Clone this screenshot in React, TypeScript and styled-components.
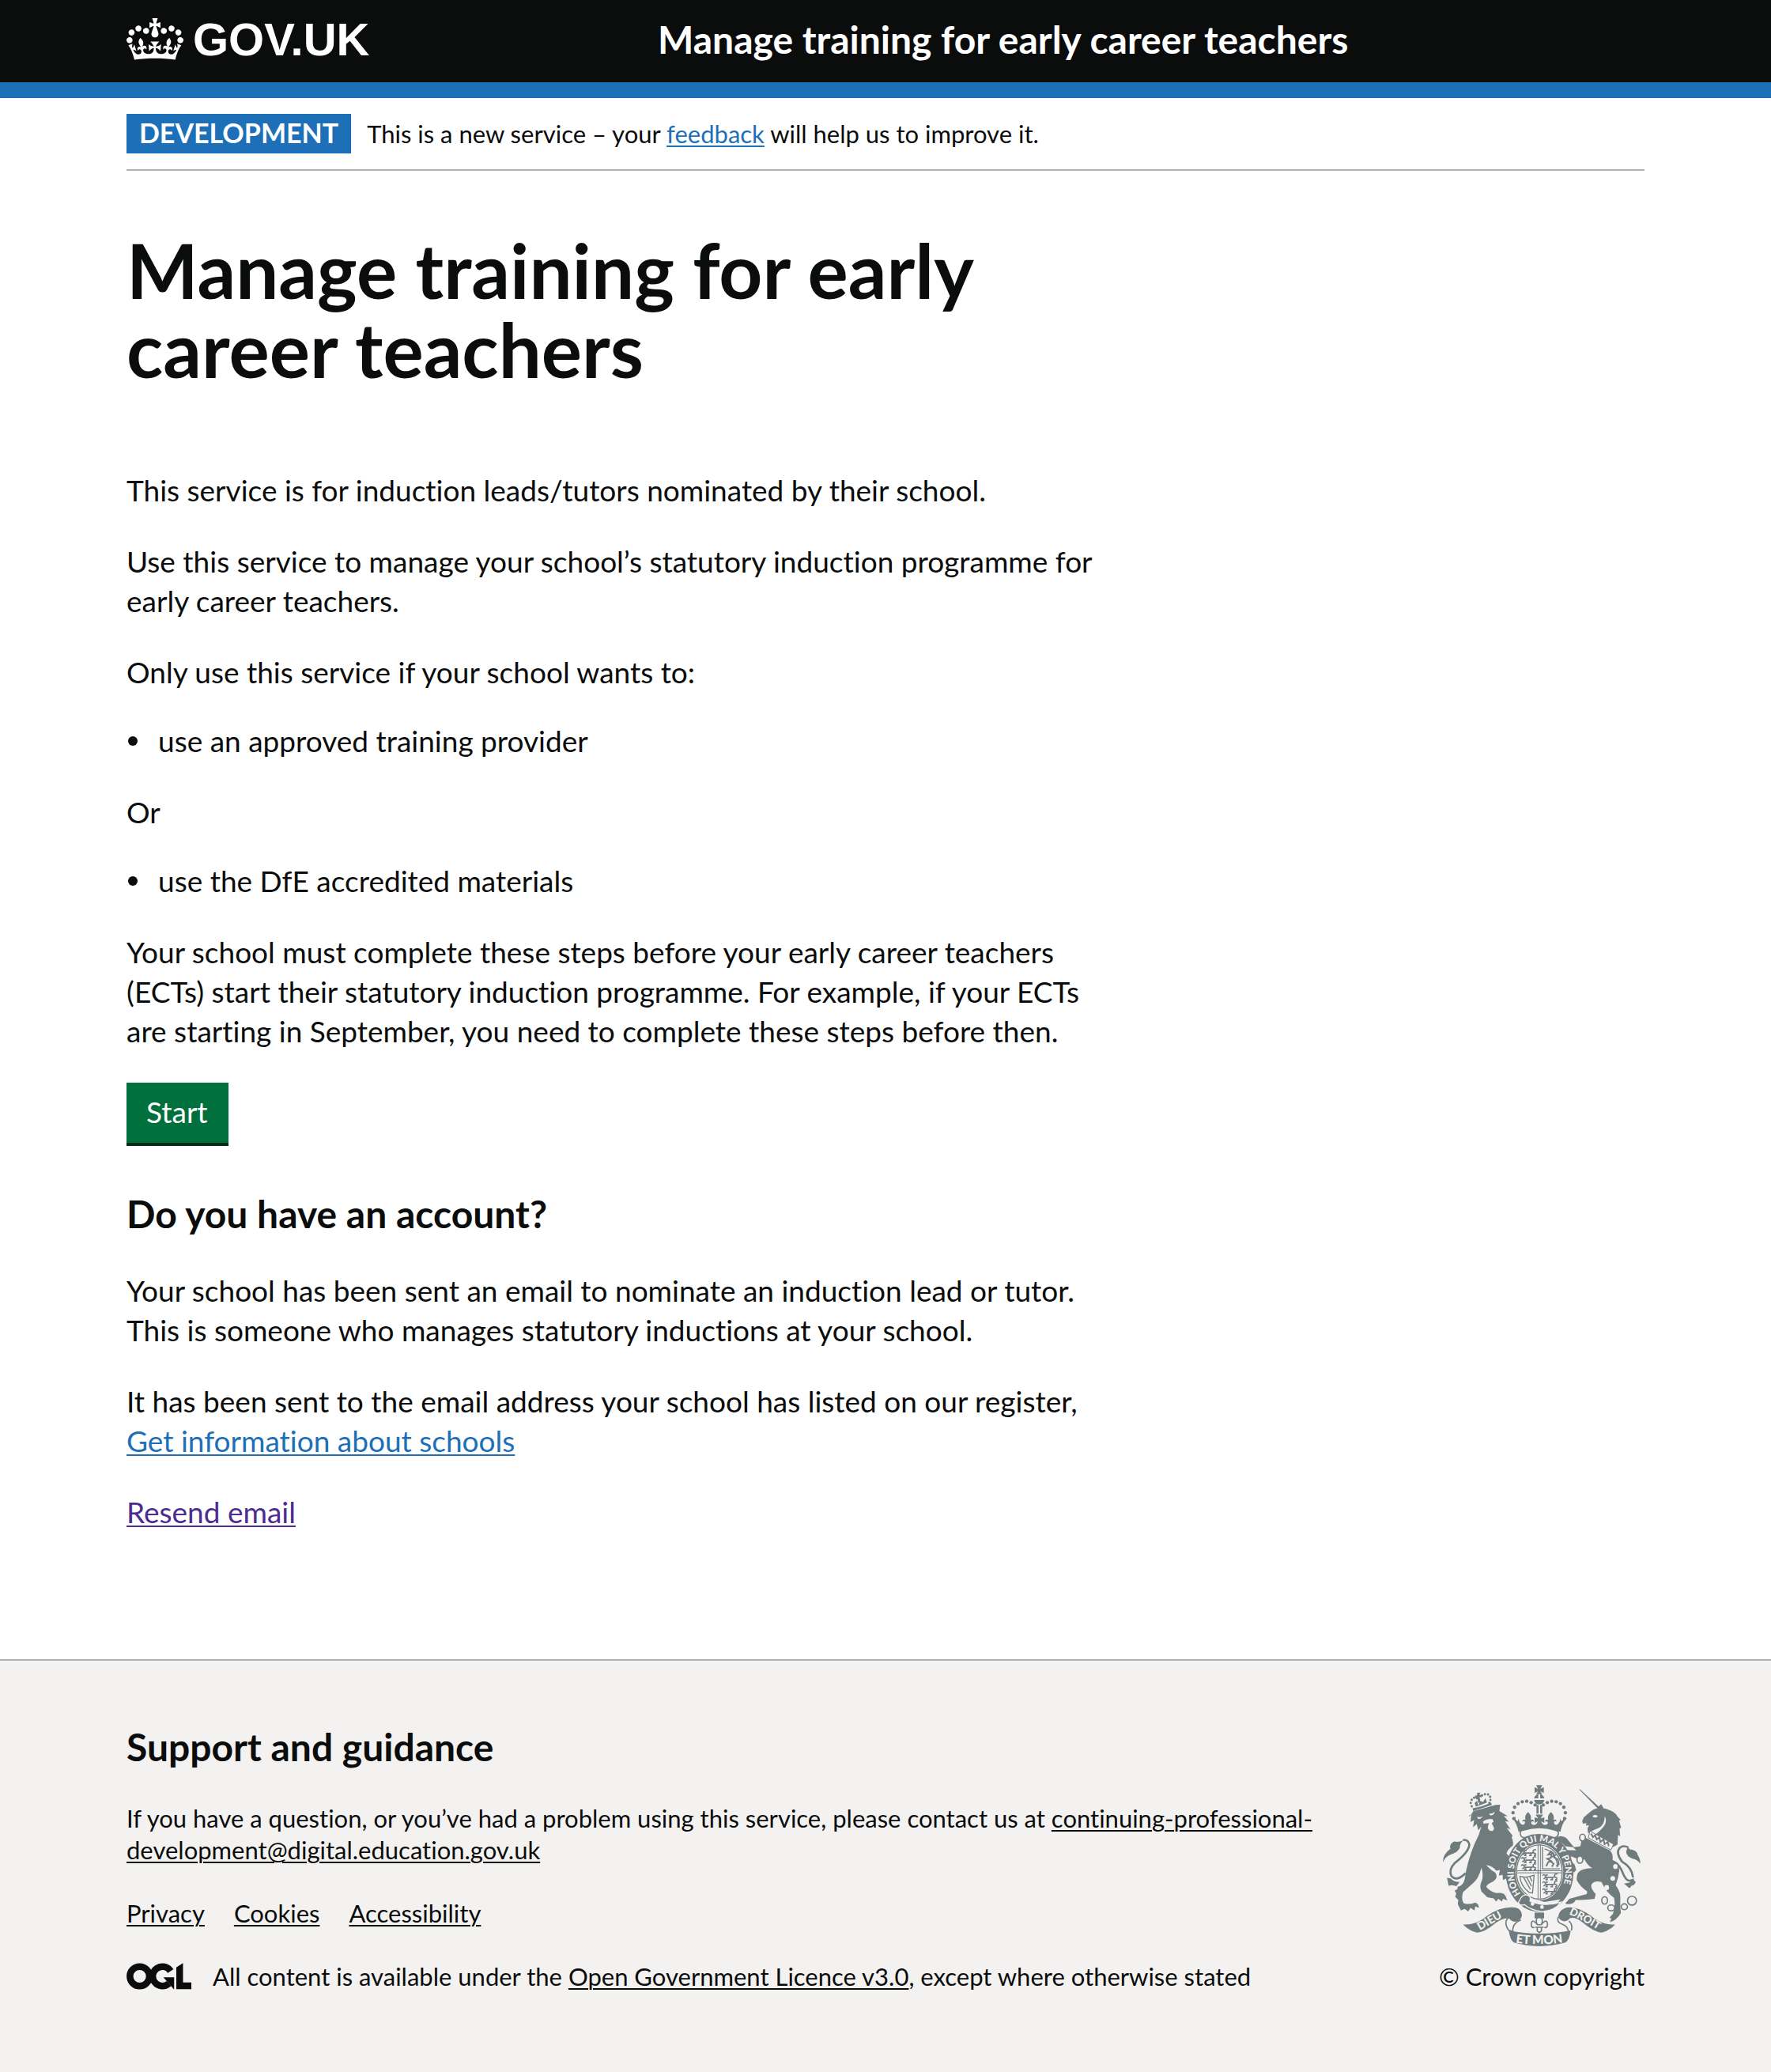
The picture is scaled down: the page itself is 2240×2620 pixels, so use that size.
import React from 'react';
import styled, { createGlobalStyle, css } from 'styled-components';

const ink = '#0b0c0c';
const blue = '#1d70b8';
const visited = '#4c2c92';
const grey = '#b1b4b6';
const footerBg = '#f3f2f1';
const armsGrey = '#707b7d';

const Global = createGlobalStyle`
  *, *::before, *::after { box-sizing: border-box; }
  html { background: ${footerBg}; }
  body {
    margin: 0;
    background: #fff;
    color: ${ink};
    font-family: Lato, "Liberation Sans", sans-serif;
    font-variant-ligatures: no-common-ligatures;
    -webkit-font-smoothing: antialiased;
  }
`;

const Container = styled.div`
  margin: 0 160px;
`;

const HeaderBar = styled.header`
  background: ${ink};
  color: #fff;
  border-bottom: 20px solid ${blue};
`;

const HeaderRow = styled(Container)`
  display: grid;
  grid-template-columns: 35fr 65fr;
  align-items: center;
  height: 104px;
  padding-bottom: 5px;
`;

const headerLink = css`
  color: #fff;
  text-decoration: none;
`;

const LogoLink = styled.a`
  ${headerLink}
  display: inline-flex;
  align-items: center;
  gap: 12px;
  justify-self: start;
`;

const Wordmark = styled.span`
  font: 700 58px/72px "Liberation Sans", Arial, sans-serif;
`;

const ServiceName = styled.a`
  ${headerLink}
  font-size: 48px;
  line-height: 60px;
  font-weight: 700;
`;

const PhaseBanner = styled(Container)`
  display: flex;
  gap: 20px;
  padding: 20px 0;
  border-bottom: 2px solid ${grey};
  font-size: 31px;
  line-height: 50px;
`;

const PhaseTag = styled.strong`
  height: 50px;
  padding: 0 16px;
  background: ${blue};
  color: #fff;
  font-size: 34px;
  line-height: 48px;
`;

const Link = styled.a<{ $tone?: string }>`
  color: ${(p) => p.$tone ?? blue};
  text-decoration: underline;
  text-decoration-thickness: 2px;
  text-underline-offset: 3px;
`;

const Main = styled(Container).attrs({ as: 'main' })`
  padding: 75px 0 121px;
`;

const Column = styled.div`
  max-width: 1260px;
`;

const PageTitle = styled.h1`
  margin: 0 0 104px;
  font-size: 96px;
  line-height: 100px;
  font-weight: 700;
`;

const Heading = styled.h2`
  margin: 0 0 42px;
  font-size: 48px;
  line-height: 60px;
  font-weight: 700;
`;

const Body = styled.p<{ $lead?: boolean }>`
  margin: 0 0 ${(p) => (p.$lead ? 37 : 40)}px;
  font-size: 37px;
  line-height: 50px;
`;

const Bullets = styled.ul`
  margin: 0 0 40px;
  padding: 0 0 0 2px;
  font-size: 37px;
  line-height: 50px;
  list-style: none;
`;

const Bullet = styled.li`
  display: flex;
  align-items: center;
  gap: 26px;

  &::before {
    content: '';
    width: 12px;
    height: 12px;
    border-radius: 50%;
    background: ${ink};
  }
`;

const StartButton = styled.button`
  display: block;
  margin: 0 0 60px;
  padding: 12px 26px 14px 25px;
  border: 0;
  background: #00703c;
  box-shadow: 0 4px 0 #002d18;
  color: #fff;
  font-family: inherit;
  font-size: 37px;
  line-height: 50px;
  cursor: pointer;
`;

const Footer = styled.footer`
  border-top: 2px solid ${grey};
  background: ${footerBg};
  padding: 79px 0 101px;
`;

const FooterRow = styled(Container)`
  display: flex;
  align-items: flex-end;
  gap: 60px;
  font-size: 31px;
  line-height: 40px;
`;

const FooterMain = styled.div`
  flex: 1;
`;

const FooterHeading = styled(Heading)`
  margin-bottom: 40px;
`;

const FooterText = styled.p`
  margin: 0 0 40px;
  max-width: 1540px;
`;

const FooterNav = styled.ul`
  display: flex;
  gap: 37px;
  margin: 0 0 40px;
  padding: 0;
  list-style: none;
`;

const Licence = styled.div`
  display: flex;
  align-items: center;
  gap: 27px;
`;

const Copyright = styled.a`
  display: flex;
  flex-direction: column;
  align-items: center;
  gap: 18px;
  color: ${ink};
  text-decoration: none;
  white-space: nowrap;
`;

const Crown = () => (
  <svg width="72" height="53" viewBox="0 0 132 97" fill="currentColor" aria-hidden="true">
    <path d="M25 30.2c3.5 1.5 7.7-.2 9.1-3.7 1.5-3.6-.2-7.8-3.9-9.2-3.6-1.4-7.6.3-9.1 3.9-1.4 3.5.3 7.5 3.9 9zM9 39.5c3.6 1.5 7.8-.2 9.2-3.7 1.5-3.6-.2-7.8-3.9-9.1-3.6-1.5-7.6.2-9.1 3.8-1.4 3.5.3 7.5 3.8 9zM4.4 57.2c3.5 1.5 7.7-.2 9.1-3.8 1.5-3.6-.2-7.7-3.9-9.1-3.5-1.5-7.6.3-9.1 3.8-1.4 3.5.3 7.6 3.9 9.1zm38.3-21.4c3.5 1.5 7.7-.2 9.1-3.8 1.5-3.6-.2-7.7-3.9-9.1-3.6-1.5-7.6.3-9.1 3.8-1.3 3.6.4 7.7 3.9 9.1zm64.4-5.6c-3.6 1.5-7.8-.2-9.1-3.7-1.5-3.6.2-7.8 3.8-9.2 3.6-1.4 7.7.3 9.2 3.9 1.3 3.5-.4 7.5-3.9 9zm15.9 9.3c-3.6 1.5-7.7-.2-9.1-3.7-1.5-3.6.2-7.8 3.7-9.1 3.6-1.5 7.7.2 9.2 3.8 1.5 3.5-.3 7.5-3.8 9zm4.7 17.7c-3.6 1.5-7.8-.2-9.2-3.8-1.5-3.6.2-7.7 3.9-9.1 3.6-1.5 7.7.3 9.2 3.8 1.3 3.5-.4 7.6-3.9 9.1zM89.3 35.8c-3.6 1.5-7.8-.2-9.2-3.8-1.4-3.6.2-7.7 3.9-9.1 3.6-1.5 7.7.3 9.2 3.8 1.4 3.6-.3 7.7-3.9 9.1zM69.7 17.7l8.9 4.7V9.3l-8.9 2.8c-.2-.3-.5-.6-.9-.9L72.4 0H59.6l3.5 11.2c-.3.3-.6.5-.9.9l-8.8-2.8v13.1l8.8-4.7c.3.3.6.7.9.9l-5 15.4v.1c-.2.8-.4 1.6-.4 2.4 0 4.1 3.1 7.5 7 8.1h.2c.3 0 .7.1 1 .1.4 0 .7 0 1-.1h.2c4-.6 7.1-4.1 7.1-8.1 0-.8-.1-1.7-.4-2.4V34l-5.1-15.4c.4-.2.7-.6 1-.9zM66 92.8c16.9 0 32.8 1.1 47.1 3.2 4-16.9 8.9-26.7 14-33.5l-9.6-3.4c1 4.9 1.1 7.2 0 10.2-1.5-1.4-3-4.3-4.2-8.7L108.6 76c2.8-2 5-3.2 7.5-3.3-4.4 9.4-10 11.9-13.6 11.2-4.3-.8-6.3-4.6-5.6-7.9 1-4.7 5.7-5.9 8-.5 4.3-8.7-3-11.4-7.6-8.8 7.1-7.2 7.9-13.5 2.1-21.1-8 6.1-8.1 12.3-4.5 20.8-4.7-5.4-12.1-2.5-9.5 6.2 3.4-5.2 7.9-2 7.2 3.1-.6 4.3-6.4 7.8-13.5 7.2-10.3-.9-10.9-8-11.2-13.8 2.5-.5 7.1 1.8 11 7.3L80.2 60c-4.1 4.4-8 5.3-12.3 5.4 1.4-4.4 8-11.6 8-11.6H55.5s6.4 7.2 7.9 11.6c-4.2-.1-8-1-12.3-5.4l1.4 16.4c3.9-5.5 8.5-7.7 10.9-7.3-.3 5.8-.9 12.8-11.1 13.8-7.2.6-12.9-2.9-13.5-7.2-.7-5 3.8-8.3 7.1-3.1 2.7-8.7-4.6-11.6-9.4-6.2 3.7-8.5 3.6-14.7-4.6-20.8-5.8 7.6-5 13.9 2.2 21.1-4.7-2.6-11.9.1-7.7 8.8 2.3-5.5 7.1-4.2 8.1.5.7 3.3-1.3 7.1-5.7 7.9-3.5.7-9-1.8-13.5-11.2 2.5.1 4.7 1.3 7.5 3.3l-4.7-15.4c-1.2 4.4-2.7 7.2-4.3 8.7-1.1-3-.9-5.3 0-10.2l-9.5 3.4c5 6.9 9.9 16.7 14 33.5 14.8-2.1 30.8-3.2 47.7-3.2z" />
  </svg>
);

/* Open Government Licence mark: two interlocked rings, an arrow and an angle. */
const LicenceMark = () => (
  <svg width="82" height="34" viewBox="0 0 483 196" role="img" aria-label="Open Government Licence">
    <g fill="none" stroke={ink} strokeWidth="50">
      <circle cx="98" cy="98" r="72.5" />
      <path d="M329 59A72.5 72.5 0 1 0 316 152" />
    </g>
    <g fill={ink}>
      <path d="M275 106h80v88h-3z" />
      <path d="M371 32L421 0v143h62v51H371z" />
    </g>
  </svg>
);

const centralPearls = [
  [371, 205], [368, 183], [374, 162], [387, 148], [403, 141], [420, 139], [437, 144], [452, 153],
];
const lionPearls = [
  [211, 158], [207, 145], [211, 133], [220, 126], [231, 127], [250, 117], [261, 112], [273, 113], [281, 122], [282, 134], [278, 145],
];
const links: [number, number, number, number][] = [
  [632, 277, 11, 13], [622, 361, 11, 14], [757, 387, 11, 12], [716, 516, 11, 14], [741, 544, 13, 11], [791, 540, 12, 11], [820, 517, 17, 17],
];

/* One quarter of the shield with three walking lions, stacked. */
const Lions = ({ x, y }: { x: number; y: number }) => (
  <g fill="none" strokeWidth="5" strokeLinejoin="round">
    {[0, 27, 54].map((dy) => (
      <path
        key={dy}
        d={`M${x + 2} ${y + dy + 6}q6 -8 10 0l4 6h26q8 -2 6 -10q6 -6 10 -1M${x + 16} ${y + dy + 12}l-10 6M${x + 18} ${y + dy + 13}l2 8h-7M${x + 38} ${y + dy + 12}l2 9h-8M${x + 46} ${y + dy + 10}l10 4v7h-6M${x + 14} ${y + dy + 3}h8`}
      />
    ))}
  </g>
);

const RoyalArms = () => (
  <svg width="250" height="204" viewBox="102 77 750 613" aria-hidden="true">
    <g fill={armsGrey} stroke="none">
      {/* royal crown */}
      {centralPearls.map(([x, y]) => (
        <React.Fragment key={`${x}-${y}`}>
          <circle cx={x} cy={y} r="6.5" />
          <circle cx={935 - x} cy={y} r="6.5" />
        </React.Fragment>
      ))}
      <path d="M456 78h23l-7 14 13-7v23l-13-7 7 11h-23l7-11-13 7V85l13 7z" />
      <path d="M464 112v16h-16q3-14 16-16zM471 112v16h16q-3-14-16-16zM448 134h39q-2 16-20 17-17-1-19-17z" />
      <path d="M457 154h8v32h-8zM471 154h8v32h-8z" />
      <path d="M453 190h29l-9 14 14-4v22l-12-7q4 15 18 14 10-3 6-12-5-4-9 0 0-12 12-7-6-15 10-30 16 15 9 30 13-5 12 7-5-5-9 0-2 11 8 12 12-1 16-24l3 10 8-6 2-12 11 6q-18 20-24 52-36-12-80-12t-79 12q-6-32-24-52l11-6 2 12 8 6 3-10q4 23 16 24 10-1 8-12-4-5-9 0-1-12 12-7-7-15 9-30 16 15 10 30 12-5 12 7-4-4-9 0-4 9 6 12 14 1 18-14l-12 7v-22l14 4z" />

      {/* lion */}
      <path d="M205 195l12-18 85-24 17-1-3 24 32 20-15-1 19 22-14-2 20 30-14-4 22 28-3 8q8 18 4 31-20 15-24 29l28 33-2 28 10 28-18 6 8 14-14-10-8 14-5-18-12 6-2-20-14 4 4-22-14 3q-12-18-38-22 18 20 34 29 14 18-8 34-22 8-26 20 14 18 38 24 30-4 36 12l6 16-16-6-4 10-14-10-8 10-10-12-24-4-22-22q-10-22 2-42 6-22-2-48-12 44-32 58l-38 34q-8 26 2 42 22 8 44-2 14 4 14 20l-14-6-2 16-16-10-8 14-14-10-14 6-12-24 2-16-12-12 4-12-6-12 10-4 2-10q20-4 26-28 10-70 38-136 18-32 26-66l-12 16-6-24-14 12 4-28-14 8 4-30-12 8z" />
      <path d="M214 166q34-4 70-22l4 9-71 23z" />
      {lionPearls.map(([x, y]) => (
        <circle key={`${x}-${y}`} cx={x} cy={y} r="4.5" />
      ))}
      <path d="M231 107l13-1-4 9 8 0 0 9-7-1 3 20-9 2-2-21-8 3-2-9 9-2zM222 146l9-9 5 18 8-17 10 4 9-15 6 17-42 16z" />
      <path d="M102 370q-2-28 28-50-6-18 14-28 22 4 38-6-18 14-16 30-8 18-36 26-20 8-28 28zM117 430l14 2q12 14 34 14l-12 16-16-4-14 2z" />

      {/* unicorn */}
      <path d="M618 93l7 3 68 63 10-9 9 16q42 8 52 30l13 14-6 2 8 28-6 2 2 30-8-6-2 38-18 10-74-44q26-16 40-36 14-18 4-38-2 34-22 44-22 8-42 20l-2-18 6-12-12 2 2-10-14 2-2-10 6-14 28-24q10-8 24-10z" />
      <path d="M652 282l84 44q14 14 10 36 24 10 26 40-4 30-14 56 18 24 18 46-2 34 2 60-18 30-42 34l6-14-8-2 14-16q10-30 4-60-30-20-48-60-22-6-34 4-14 12 12 42l-4 18q-32 6-72 4-8 18-32 16l-8-2 16-18 66-18 2-10q-28-20-40-44-2-34 26-40 18-6 34-4-22-14-30-34-24 2-50-12-8 12 12 32l6 20-8 10-6-10-10 4-4-12-14 0 2-16-8-34-14 4-6-14 18-8 50 2-12-12-30-4q-6-10-18-16l-20-2-4-12 20-8q24-2 36 18l20 24 24-4q2-22 12-38z" />
      <path d="M812 322q28 2 30 22 10 14 10 32-14-16-28-18-26-10-26-28l6-18zM790 452l20-4q16-10 18-24-4 18 6 20-2 14-16 16-4 10-10 8z" />

      {/* garter */}
      <ellipse cx="469" cy="410" rx="129" ry="149" />

      {/* motto scroll */}
      <path d="M178 607q50 4 94-34 52-36 104-30 26 6 26 30-4 20-24 24-16 0-24-12-20-6-52 16-42 36-72 37-30-8-52-31z" />
      <path d="M756 607q-50 4-94-34-52-36-90-30-28 8-32 32 2 16 22 20 16-2 22-12 20-6 48 16 42 36 72 39 34-8 52-31z" />
      <path d="M352 630q115 24 235 0-4 36-20 46-100 28-196 0-15-10-19-46z" />
      <path d="M450 562h36v22h-36z" />
    </g>

    <g fill="none" stroke={armsGrey} strokeWidth="5">
      <path d="M396 264q-4-14 14-16 58-18 116 0 18 4 14 16-4 16-20 12-56-20-104 0-18 4-20-12z" fill={footerBg} />
      <path d="M188 412q-34 34-54 12-12-24 12-50 54-42 56-70-4-20-24-18" strokeWidth="8" />
      <path d="M762 420q-4-20-6-34M752 370q20 6 36 48 16 34 36 18M824 428q-4-38-42-60-24-32-10-50 12-14 34-4" strokeWidth="8" />
      <path d="M350 628q-20-34 4-48 24-6 42-6M350 628l18 8M398 590q-36 14-30 48" />
      <path d="M590 630q6-24-10-36M540 578q-8 22 14 28 24 8 24 30" />
      <path d="M467 570q-18 22-6 38h14q12-16-8-38M461 608q-22-26-24-2 0 16 12 12M475 608q22-26 24-2 0 16-12 12M452 618h32M460 620v12l8 6 8-6v-12" />
      {links.map(([x, y, rx, ry]) => (
        <ellipse key={`${x}-${y}`} cx={x} cy={y} rx={rx} ry={ry} fill={footerBg} />
      ))}
    </g>

    {/* pale details over the silhouettes */}
    <g fill={footerBg}>
      <path d="M231 198q14 4 22-2-6 12-18 10zM276 187q14 0 22-8-2 14-16 14zM254 216q12-10 34-10 6 4 6 12-8 0-6 8 14 18 2 26-16 2-18-14l4-16-20 2z" />
      <ellipse cx="680" cy="196" rx="9" ry="5" />
      <ellipse cx="747" cy="432" rx="9" ry="9" />
      <ellipse cx="724" cy="467" rx="9" ry="10" />
      <path d="M660 252l90 50-10 22-86-46z" stroke={armsGrey} strokeWidth="3" />
      <ellipse cx="468" cy="408" rx="91" ry="108" />
      <path d="M402 502q20-10 32 6l54 14 60-10q-20 30-60 26-40-6-52-18-12 18-32 10z" />
    </g>

    <g fill="none" stroke={armsGrey} strokeWidth="4">
      <ellipse cx="468" cy="408" rx="87" ry="103" />
      <path d="M463 304v206M472 304v206M381 403h174M381 411h174" strokeWidth="3" />
      <Lions x={397} y={324} />
      <Lions x={478} y={416} />
      <path d="M480 312v84h66M488 320q44 12 50 70" />
      <path d="M494 386l8-16 10-4-14-8 14-4 2-14-12 2 10-12 10 8 2 14 14 8 4 18-10 8M508 366l14 10-6 12M516 350l16-8" strokeWidth="6" />
      <path d="M394 424q22 8 54-4l-6 68-14-2M394 424q2 36 36 62M408 428l26 46M420 428l18 34M432 426l8 18" />
      <path d="M664 262l8 14 8-8 6 16 10-8 4 18 12-10 4 18 12-8 4 16" strokeWidth="6" />
    </g>
    <g fill={armsGrey} stroke={footerBg} strokeWidth="4">
      <path d="M398 506q10-14 26-10 14 8 8 22 58 24 118 4-24 34-72 36-44-6-66-26-18 6-24-8z" />
      <circle cx="442" cy="529" r="5" fill={footerBg} />
      <circle cx="478" cy="541" r="5" fill={footerBg} />
    </g>

    <defs>
      <path id="garter-line" d="M397 490A98 118 0 1 1 533 499" />
      <path id="dieu-line" d="M242 630Q290 602 346 570" />
      <path id="droit-line" d="M580 568Q640 594 700 634" />
      <path id="mon-line" d="M378 676Q467 690 566 674" />
    </defs>
    <g fill={footerBg} fontFamily="Lato, sans-serif" fontWeight="900">
      <text fontSize="34"><textPath href="#garter-line">HONI SOIT QUI MAL Y PENSE</textPath></text>
      <text fontSize="42"><textPath href="#dieu-line">DIEU</textPath></text>
      <text fontSize="40"><textPath href="#droit-line">DROIT</textPath></text>
      <text fontSize="46"><textPath href="#mon-line">ET MON</textPath></text>
    </g>
  </svg>
);

export default function App() {
  return (
    <>
      <Global />
      <HeaderBar>
        <HeaderRow>
          <LogoLink href="#">
            <Crown />
            <Wordmark>GOV.UK</Wordmark>
          </LogoLink>
          <ServiceName href="#">Manage training for early career teachers</ServiceName>
        </HeaderRow>
      </HeaderBar>

      <PhaseBanner>
        <PhaseTag>DEVELOPMENT</PhaseTag>
        <span>
          This is a new service – your <Link href="#">feedback</Link> will help us to improve it.
        </span>
      </PhaseBanner>

      <Main>
        <Column>
          <PageTitle>Manage training for early career teachers</PageTitle>
          <Body>This service is for induction leads/tutors nominated by their school.</Body>
          <Body>
            Use this service to manage your school’s statutory induction programme for early career teachers.
          </Body>
          <Body $lead>Only use this service if your school wants to:</Body>
          <Bullets>
            <Bullet>use an approved training provider</Bullet>
          </Bullets>
          <Body $lead>Or</Body>
          <Bullets>
            <Bullet>use the DfE accredited materials</Bullet>
          </Bullets>
          <Body>
            Your school must complete these steps before your early career teachers (ECTs) start their statutory
            induction programme. For example, if your ECTs are starting in September, you need to complete these
            steps before then.
          </Body>
          <StartButton type="button">Start</StartButton>
          <Heading>Do you have an account?</Heading>
          <Body>
            Your school has been sent an email to nominate an induction lead or tutor. This is someone who manages
            statutory inductions at your school.
          </Body>
          <Body>
            It has been sent to the email address your school has listed on our register,{' '}
            <Link href="#">Get information about schools</Link>
          </Body>
          <Body>
            <Link href="#" $tone={visited}>Resend email</Link>
          </Body>
        </Column>
      </Main>

      <Footer>
        <FooterRow>
          <FooterMain>
            <FooterHeading>Support and guidance</FooterHeading>
            <FooterText>
              If you have a question, or you’ve had a problem using this service, please contact us at{' '}
              <Link $tone={ink} href="mailto:continuing-professional-development@digital.education.gov.uk">
                continuing-professional-development@digital.education.gov.uk
              </Link>
            </FooterText>
            <FooterNav>
              <li><Link $tone={ink} href="#">Privacy</Link></li>
              <li><Link $tone={ink} href="#">Cookies</Link></li>
              <li><Link $tone={ink} href="#">Accessibility</Link></li>
            </FooterNav>
            <Licence>
              <LicenceMark />
              <span>
                All content is available under the <Link $tone={ink} href="#">Open Government Licence v3.0</Link>,
                except where otherwise stated
              </span>
            </Licence>
          </FooterMain>
          <Copyright href="#">
            <RoyalArms />
            <span>© Crown copyright</span>
          </Copyright>
        </FooterRow>
      </Footer>
    </>
  );
}
